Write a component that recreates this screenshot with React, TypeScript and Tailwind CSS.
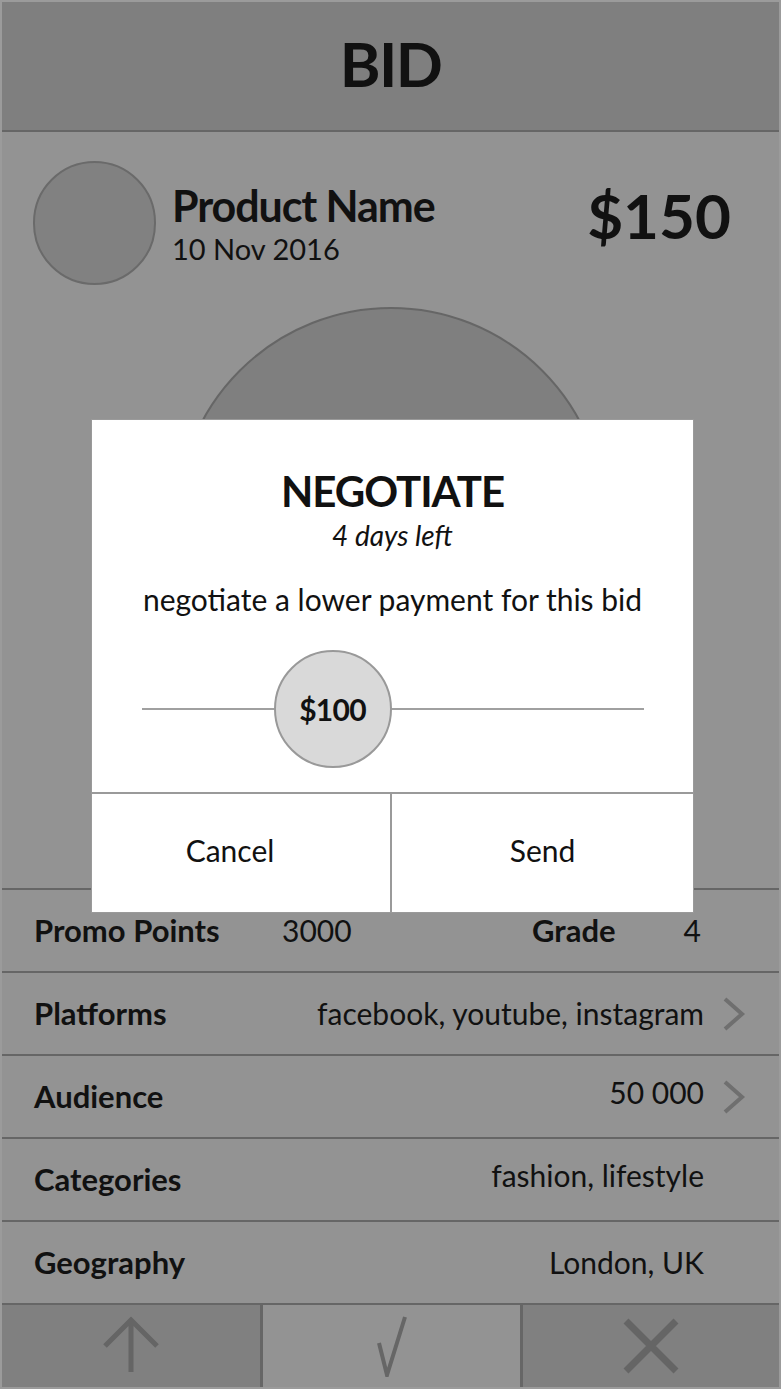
import React from 'react';

const rows = [
    { label: 'Platforms', value: 'facebook, youtube, instagram', chevron: true, lift: 'mt-0' },
    { label: 'Audience', value: '50 000', chevron: true, lift: '-mt-[8px]' },
    { label: 'Categories', value: 'fashion, lifestyle', chevron: false, lift: '-mt-[9px]' },
    { label: 'Geography', value: 'London, UK', chevron: false, lift: 'mt-0' },
];

const Chevron = () => (
    <svg width="24" height="36" viewBox="0 0 24 36" fill="none" stroke="#6f6f6f" strokeWidth="4">
        <path d="M3 3L20 18L3 33" />
    </svg>
);

const App: React.FC = () => {
    return (
        <div className="font-['Lato',sans-serif] text-[#111]">
            <div className="relative w-[781px] h-[1389px] border-2 border-[#9b9b9b] bg-[#939393] flex flex-col overflow-hidden">
                {/* Header */}
                <div className="h-[130px] shrink-0 bg-[#7f7f7f] border-b-2 border-[#666] flex items-center justify-center pb-[6px]">
                    <h1 className="text-[62px] font-bold tracking-tight leading-none">BID</h1>
                </div>

                {/* Product */}
                <div className="flex-1 flex flex-col">
                    <div className="flex items-center px-[31px] pt-[29px]">
                        <div className="w-[123px] h-[124px] rounded-full bg-[#818181] border-2 border-[#6a6a6a]" />
                        <div className="ml-[16px] flex flex-col">
                            <span className="text-[43px] font-bold leading-[50px] tracking-tight">Product Name</span>
                            <span className="text-[29px] leading-[35px]">10 Nov 2016</span>
                        </div>
                        <span className="ml-auto mr-[17px] -mt-[16px] text-[62px] font-bold leading-none">$150</span>
                    </div>
                    <div className="flex justify-center mt-[22px]">
                        <div className="w-[430px] h-[430px] rounded-full bg-[#7f7f7f] border-2 border-[#666]" />
                    </div>
                </div>

                {/* Rows */}
                <div className="shrink-0 flex flex-col">
                    <div className="h-[83px] border-t-2 border-[#666] flex items-center pl-[32px] pr-[78px]">
                        <span className="font-bold text-[31px] w-[248px]">Promo Points</span>
                        <span className="text-[30px]">3000</span>
                        <span className="ml-auto font-bold text-[31px]">Grade</span>
                        <span className="ml-[68px] text-[30px]">4</span>
                    </div>
                    {rows.map((r) => (
                        <div key={r.label} className="h-[83px] border-t-2 border-[#666] flex items-center pl-[32px] pr-[33px]">
                            <span className="font-bold text-[31px]">{r.label}</span>
                            <span className={`ml-auto text-[30px] ${r.lift}`}>{r.value}</span>
                            <div className="ml-[18px] w-[24px] flex items-center">{r.chevron && <Chevron />}</div>
                        </div>
                    ))}
                </div>

                {/* Bottom bar */}
                <div className="h-[84px] shrink-0 border-t-2 border-[#666] grid grid-cols-[258px_3px_257px_3px_1fr]">
                    <div className="bg-[#808080] flex items-center justify-center">
                        <svg width="60" height="60" viewBox="0 0 60 60" fill="none" stroke="#656565" strokeWidth="5">
                            <path d="M30 56V6M4 30L30 4L56 30" />
                        </svg>
                    </div>
                    <div className="bg-[#666]" />
                    <div className="bg-[#939393] flex items-center justify-center">
                        <svg width="40" height="62" viewBox="0 0 40 62" fill="none" stroke="#666" strokeWidth="4">
                            <path d="M7 28L15 60L33 2" />
                        </svg>
                    </div>
                    <div className="bg-[#666]" />
                    <div className="bg-[#808080] flex items-center justify-center">
                        <svg width="60" height="56" viewBox="0 0 60 56" fill="none" stroke="#656565" strokeWidth="7">
                            <path d="M5 3L55 53M55 3L5 53" />
                        </svg>
                    </div>
                </div>

                {/* Negotiate modal */}
                <div className="absolute left-[89px] top-[417px] w-[603px] h-[494px] bg-white border border-[#9a9a9a] flex flex-col">
                    <div className="flex-1 flex flex-col items-center pt-[49px]">
                        <h2 className="text-[42px] font-bold leading-[44px] tracking-tight">NEGOTIATE</h2>
                        <p className="text-[28px] italic leading-[44px]">4 days left</p>
                        <p className="text-[30px] mt-[25px] leading-[34px]">negotiate a lower payment for this bid</p>
                        <div className="relative w-[502px] h-[118px] mt-[34px] flex items-center">
                            <div className="w-full h-[2px] bg-[#a0a0a0]" />
                            <div className="absolute left-[132px] top-0 w-[118px] h-[118px] rounded-full bg-[#d9d9d9] border-2 border-[#999] flex items-center justify-center">
                                <span className="text-[30px] font-bold tracking-tight">$100</span>
                            </div>
                        </div>
                    </div>
                    <div className="h-[120px] shrink-0 border-t-2 border-[#9a9a9a] grid grid-cols-[298px_2px_1fr]">
                        <div className="flex items-center justify-center text-[30px] pr-[22px] pb-[6px]">Cancel</div>
                        <div className="bg-[#9a9a9a]" />
                        <div className="flex items-center justify-center text-[30px] pb-[6px]">Send</div>
                    </div>
                </div>
            </div>
        </div>
    );
};

export default App;
